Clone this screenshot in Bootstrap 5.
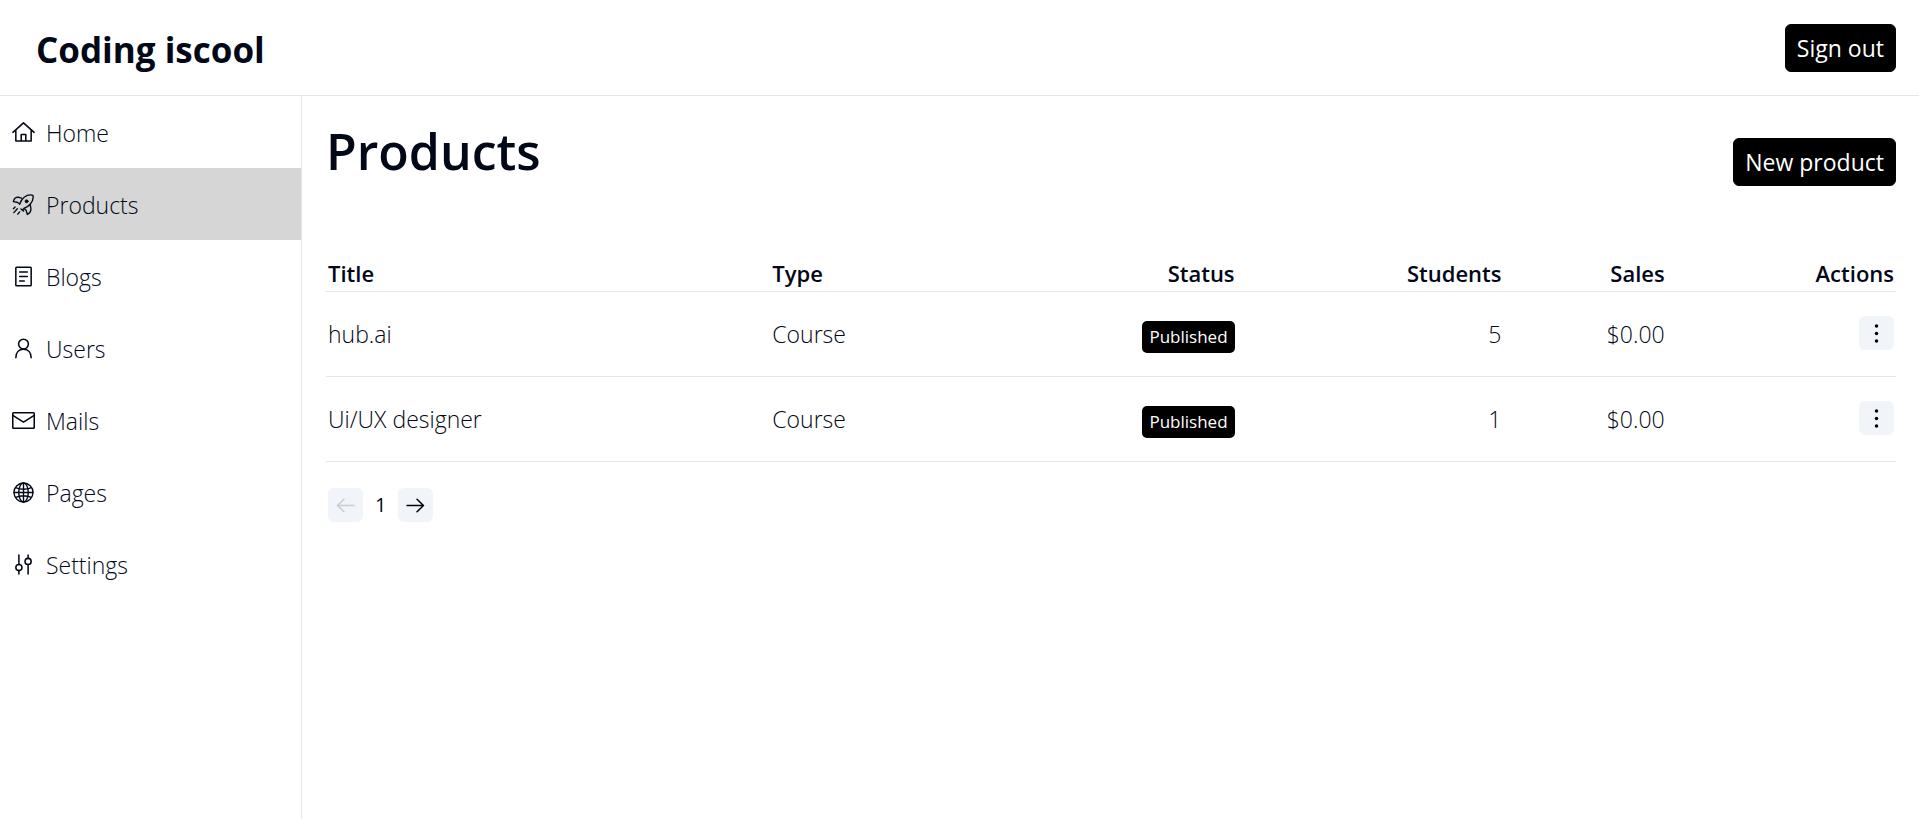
<!DOCTYPE html>
<html lang="en">
<head>
<meta charset="utf-8">
<meta name="viewport" content="width=device-width, initial-scale=1">
<title>Coding iscool – Products</title>
<link href="https://cdn.jsdelivr.net/npm/bootstrap@5.3.0/dist/css/bootstrap.min.css" rel="stylesheet">
<style>
  :root { --ink: #020817; --line: #e2e8f0; --soft: #f1f5f9; }
  body { font-family: "Open Sans", "Noto Sans", sans-serif; font-size: 23px; line-height: 36px; font-weight: 300; color: var(--ink); background: #fff; }
  .topbar { height: 96px; border-bottom: 1px solid var(--line); padding: 0 23px 0 36px; }
  .brand-name { font-size: 35px; font-weight: 700; line-height: 48px; padding-top: 4px; color: var(--ink); text-decoration: none; }
  .sidebar { width: 302px; border-right: 1px solid var(--line); }
  .side-link { height: 72px; padding-left: 12px; gap: 11px; color: var(--ink); text-decoration: none; }
  .side-link.current { background: #d6d6d6; }
  .icon { width: 23px; height: 23px; flex: none; fill: none; stroke: currentColor; stroke-linecap: round; stroke-linejoin: round; }
  .side-link span { padding-top: 2px; }
  .btn-ink { --bs-btn-color: #fff; --bs-btn-bg: #000; --bs-btn-border-color: #000; --bs-btn-hover-color: #fff; --bs-btn-hover-bg: #222; --bs-btn-active-bg: #222; --bs-btn-active-color: #fff;
    --bs-btn-font-size: 23px; --bs-btn-line-height: 36px; --bs-btn-padding-x: 11px; --bs-btn-padding-y: 5px; --bs-btn-border-radius: 6px; --bs-btn-font-weight: 400; line-height: 36px; }
  .btn-tile { width: 35px; height: 34px; padding: 0; border: 0; border-radius: 6px; background: var(--soft); color: #000; }
  .btn-tile:disabled { background: var(--soft); color: #000; opacity: 1; }
  .btn-tile:disabled .icon { opacity: .16; }
  .content { padding: 20px 23px 24px 24px; }
  .page-head { margin-bottom: 69px; }
  .page-title { font-size: 50px; line-height: 70px; font-weight: 600; }
  .products { --bs-table-color: var(--ink); --bs-table-bg: transparent; table-layout: fixed; border-color: var(--line); }
  .products > :not(caption) > * > * { padding: 0 2px; }
  .products th { height: 36px; font-weight: 600; font-size: 22px; }
  .products td { height: 85px; }
  .products .row-actions { vertical-align: top; padding-top: 24px; line-height: 34px; }
  .row-actions .btn-tile { vertical-align: top; }
  .tag { font-size: 17px; line-height: 24px; font-weight: 400; padding: 4px 7px; border-radius: 5px; }
  .pager { gap: 12px; margin: 26px 0 0 2px; }
  .page-no { font-size: 20px; font-weight: 400; line-height: 34px; }
</style>
</head>
<body>
<div class="d-flex flex-column min-vh-100">
  <header class="topbar d-flex align-items-center justify-content-between">
    <a class="brand-name" href="#">Coding iscool</a>
    <button type="button" class="btn btn-ink">Sign out</button>
  </header>
  <div class="d-flex flex-grow-1">
    <nav class="sidebar flex-shrink-0" aria-label="Main">
      <a class="side-link d-flex align-items-center" href="#">
        <svg class="icon" viewBox="0 0 15 15" aria-hidden="true"><path d="M.6 7.400 7.500 1.200l6.900 6.200M2.500 6v7h10V6M6 13V8.800h3V13"/></svg><span>Home</span></a>
      <a class="side-link current d-flex align-items-center" href="#" aria-current="page">
        <svg class="icon" viewBox="0 0 15 15" stroke-width=".9" aria-hidden="true"><path d="M5 7.200C6.200 4 8.800 1.200 12.300 1.200c1.300 0 1.600.5 1.500 1.800C13.700 6 11 8.800 7.900 10.100"/><path d="M5 7.200 3.400 6 .9 5.600C1.200 4 2.500 2.700 4 2.700l2.200.7M5.800 10.400 7.600 11.800M7.900 10.100 6.900 11M11.900 7.600l.4 2.500c.2 1.500-.8 3-2.300 3.900L9.200 11.200 7.900 10.100"/><circle cx="9.500" cy="5.400" r="1" fill="currentColor" stroke-width=".5"/><path d="M2 9.100.9 10.200M3.500 10.300 1.200 12.800M5 12.300 3.800 13.800"/></svg><span>Products</span></a>
      <a class="side-link d-flex align-items-center" href="#">
        <svg class="icon" viewBox="0 0 15 15" aria-hidden="true"><rect x="2.500" y="1.500" width="10" height="12" rx=".5"/><path d="M5 4.600h5M5 7.500h5M5 10.400h3"/></svg><span>Blogs</span></a>
      <a class="side-link d-flex align-items-center" href="#">
        <svg class="icon" viewBox="0 0 15 15" aria-hidden="true"><circle cx="7.500" cy="4.600" r="3.200"/><path d="M2.500 13.500C2.500 10 4.500 7.900 7.500 7.900s5 2.100 5 5.600"/></svg><span>Users</span></a>
      <a class="side-link d-flex align-items-center" href="#">
        <svg class="icon" viewBox="0 0 15 15" aria-hidden="true"><rect x=".5" y="2.500" width="14" height="10" rx=".5"/><path d="m.8 4.300 6.700 4.300 6.700-4.300"/></svg><span>Mails</span></a>
      <a class="side-link d-flex align-items-center" href="#">
        <svg class="icon" viewBox="0 0 15 15" stroke-width=".9" aria-hidden="true"><circle cx="7.500" cy="7.500" r="6.200"/><ellipse cx="7.500" cy="7.500" rx="3.100" ry="6.200"/><path d="M7.500 1.300v12.400M1.300 7.500h12.400M2.300 4.300c3 1.200 7.400 1.200 10.400 0M2.300 10.700c3-1.200 7.400-1.200 10.400 0"/></svg><span>Pages</span></a>
      <a class="side-link d-flex align-items-center" href="#">
        <svg class="icon" viewBox="0 0 15 15" aria-hidden="true"><path d="M4.500 1.300v6.200M4.500 11.500v2.200M10.500 1.300v2.200M10.500 7.500v6.200"/><circle cx="4.500" cy="9.500" r="2"/><circle cx="10.500" cy="5.500" r="2"/></svg><span>Settings</span></a>
    </nav>
    <main class="content flex-grow-1">
      <div class="page-head d-flex justify-content-between align-items-end">
        <h1 class="page-title mb-0">Products</h1>
        <button type="button" class="btn btn-ink">New product</button>
      </div>
      <table class="products table align-middle mb-0">
        <colgroup><col style="width:28.3%"><col style="width:14.9%"><col style="width:14.8%"><col style="width:17%"><col style="width:10.4%"><col></colgroup>
        <thead>
          <tr><th scope="col">Title</th><th scope="col">Type</th><th scope="col" class="text-end">Status</th><th scope="col" class="text-end">Students</th><th scope="col" class="text-end">Sales</th><th scope="col" class="text-end">Actions</th></tr>
        </thead>
        <tbody>
          <tr><td>hub.ai</td><td>Course</td><td class="text-end"><span class="tag d-inline-block text-white bg-black">Published</span></td><td class="text-end">5</td><td class="text-end">$0.00</td>
            <td class="row-actions text-end"><button type="button" class="btn btn-tile d-inline-flex align-items-center justify-content-center" aria-label="Actions for hub.ai"><svg class="icon" viewBox="0 0 15 15" aria-hidden="true"><g fill="currentColor" stroke="none"><circle cx="7.500" cy="2.600" r="1.150"/><circle cx="7.500" cy="7.500" r="1.150"/><circle cx="7.500" cy="12.400" r="1.150"/></g></svg></button></td></tr>
          <tr><td>Ui/UX designer</td><td>Course</td><td class="text-end"><span class="tag d-inline-block text-white bg-black">Published</span></td><td class="text-end">1</td><td class="text-end">$0.00</td>
            <td class="row-actions text-end"><button type="button" class="btn btn-tile d-inline-flex align-items-center justify-content-center" aria-label="Actions for Ui/UX designer"><svg class="icon" viewBox="0 0 15 15" aria-hidden="true"><g fill="currentColor" stroke="none"><circle cx="7.500" cy="2.600" r="1.150"/><circle cx="7.500" cy="7.500" r="1.150"/><circle cx="7.500" cy="12.400" r="1.150"/></g></svg></button></td></tr>
        </tbody>
      </table>
      <div class="pager d-flex align-items-center">
        <button type="button" class="btn btn-tile d-inline-flex align-items-center justify-content-center" aria-label="Previous page" disabled><svg class="icon" viewBox="0 0 15 15" aria-hidden="true"><path d="M13 7.500H2.300M6.500 3.400 2.300 7.500l4.200 4.100"/></svg></button>
        <span class="page-no">1</span>
        <button type="button" class="btn btn-tile d-inline-flex align-items-center justify-content-center" aria-label="Next page"><svg class="icon" viewBox="0 0 15 15" aria-hidden="true"><path d="M2 7.500h10.700M8.500 3.400l4.200 4.100-4.200 4.100"/></svg></button>
      </div>
    </main>
  </div>
</div>
<script src="https://cdn.jsdelivr.net/npm/bootstrap@5.3.0/dist/js/bootstrap.bundle.min.js"></script>
</body>
</html>
